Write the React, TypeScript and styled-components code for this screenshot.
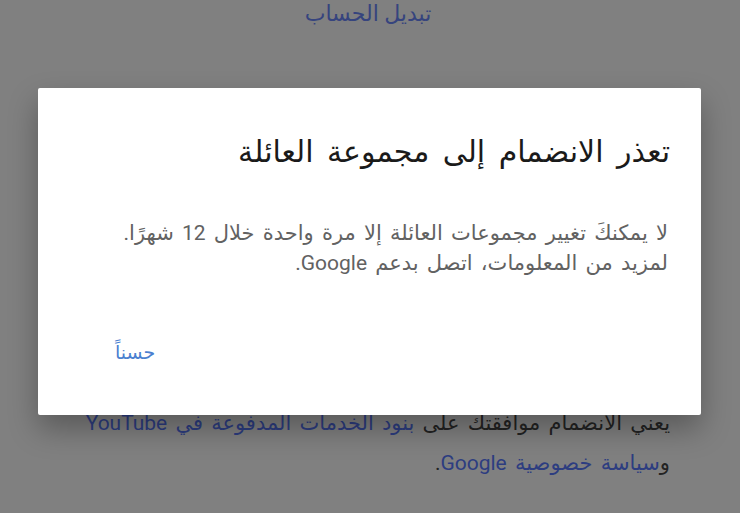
import React from 'react';
import styled, { createGlobalStyle } from 'styled-components';

const GlobalStyle = createGlobalStyle`
  html, body {
    margin: 0;
    padding: 0;
    background: #808080;
  }
  body {
    font-family: Roboto, "DejaVu Sans", sans-serif;
  }
`;

const Page = styled.div`
  position: relative;
  width: 740px;
  height: 513px;
  overflow: hidden;
  background: #808080;
  direction: rtl;
`;

const SwitchLink = styled.div`
  text-align: center;
  padding-right: 4px;
  font-size: 22px;
  line-height: 28px;
  color: #36447e;
`;

const Terms = styled.p`
  margin: 375px 70px 0 0;
  font-size: 21px;
  line-height: 40px;
  word-spacing: 3px;
  color: #232323;
`;

const Link = styled.span`
  color: #2d3d80;
`;

const Dialog = styled.div`
  position: absolute;
  left: 38px;
  top: 88px;
  width: 663px;
  height: 327px;
  box-sizing: border-box;
  padding: 44px 31px 0 38px;
  background: #ffffff;
  border-radius: 2px;
  box-shadow: 0 14px 30px rgba(0, 0, 0, 0.3);
  display: flex;
  flex-direction: column;
`;

const Title = styled.h2`
  margin: 0;
  font-size: 30px;
  font-weight: normal;
  word-spacing: 6px;
  color: #1a1a1a;
  line-height: 40px;
`;

const Body = styled.p`
  margin: 46px 2px 0 0;
  font-size: 21px;
  line-height: 30px;
  word-spacing: 3px;
  color: #626262;
`;

const Actions = styled.div`
  display: flex;
  justify-content: flex-end;
  margin-top: 60px;
  padding-left: 39px;
`;

const OkButton = styled.button`
  border: none;
  background: none;
  padding: 0;
  font-family: inherit;
  font-size: 19px;
  line-height: 30px;
  color: #4a7fd0;
  cursor: pointer;
`;

export default function App() {
  return (
    <Page>
      <GlobalStyle />
      <SwitchLink>تبديل الحساب</SwitchLink>
      <Terms>
        يعني الانضمام موافقتك على <Link>بنود الخدمات المدفوعة في YouTube</Link>
        <br />
        و<Link>سياسة خصوصية Google</Link>.
      </Terms>
      <Dialog>
        <Title>تعذر الانضمام إلى مجموعة العائلة</Title>
        <Body>
          لا يمكنكَ تغيير مجموعات العائلة إلا مرة واحدة خلال 12 شهرًا.
          <br />
          لمزيد من المعلومات، اتصل بدعم Google.
        </Body>
        <Actions>
          <OkButton>حسناً</OkButton>
        </Actions>
      </Dialog>
    </Page>
  );
}
